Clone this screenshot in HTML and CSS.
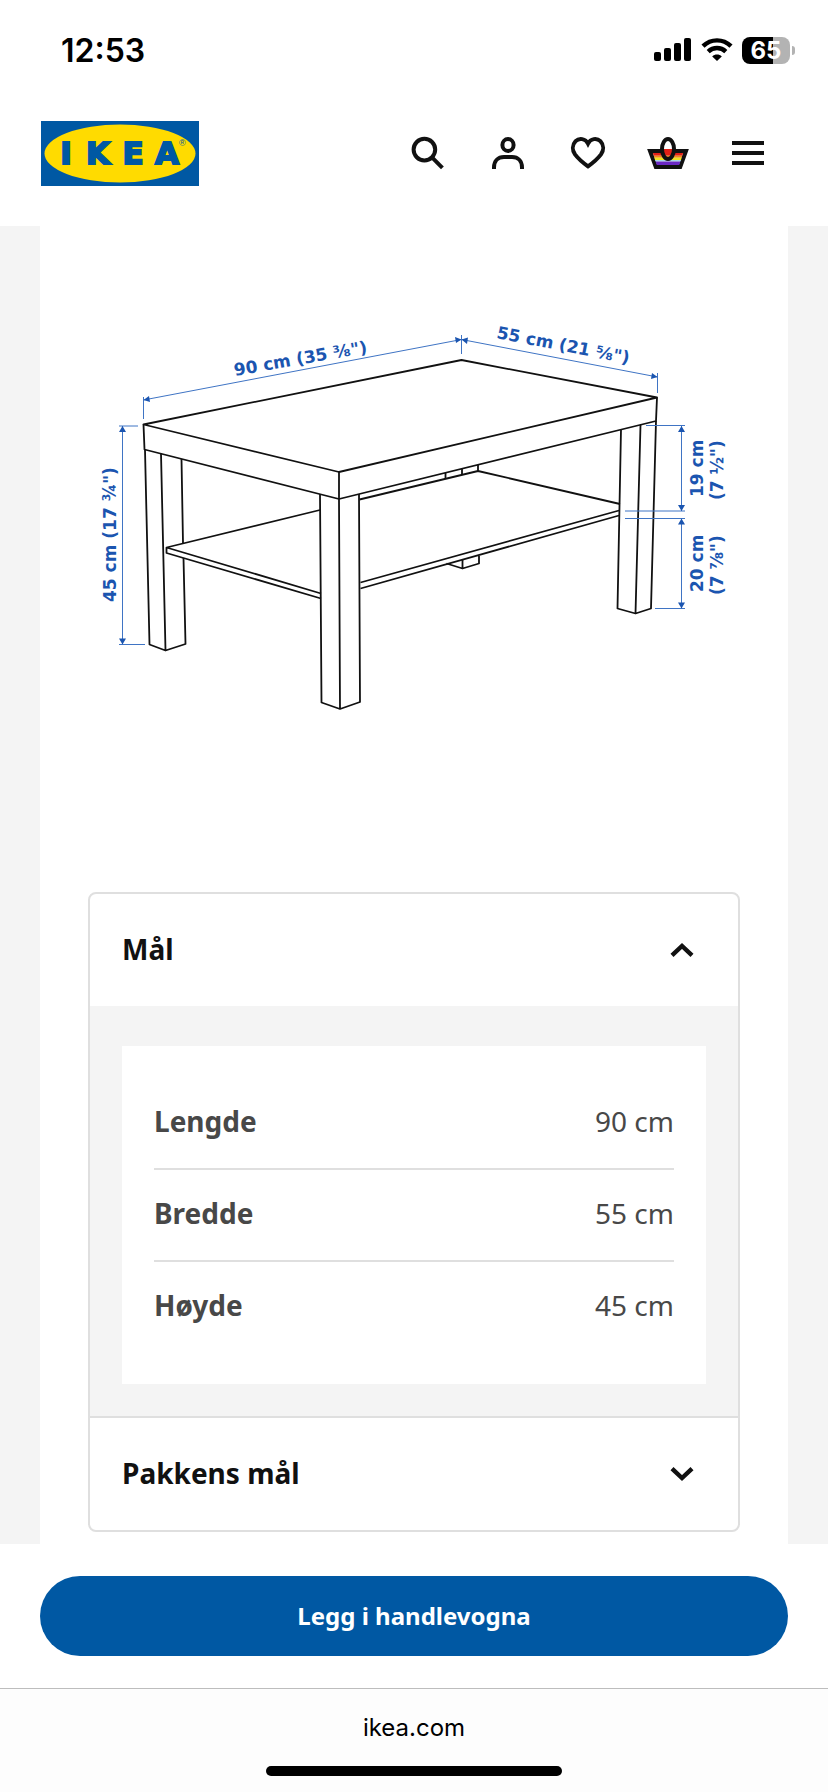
FILE: index.html
```html
<!DOCTYPE html>
<html lang="no">
<head>
  <meta charset="utf-8">
  <meta name="viewport" content="width=device-width, initial-scale=1.0">
  <title>Mål - IKEA</title>
  <link rel="stylesheet" href="styles.css">
</head>
<body>

  <div class="status-bar">
    <span class="time">12:53</span>
    <div class="status-icons">
      <svg class="signal" viewBox="0 0 38 24" width="38" height="24" aria-hidden="true">
        <rect x="0" y="14" width="7" height="9" rx="2"/>
        <rect x="10" y="10" width="7" height="13" rx="2"/>
        <rect x="20" y="5" width="7" height="18" rx="2"/>
        <rect x="30" y="0" width="7" height="23" rx="2"/>
      </svg>
      <svg class="wifi" viewBox="0 0 32 24" width="32" height="24" aria-hidden="true">
        <path d="M2 8.2C10 .4 22 .4 30 8.2" fill="none" stroke="#000" stroke-width="4.4"/>
        <path d="M7.2 13.6c5-4.8 12.6-4.8 17.6 0" fill="none" stroke="#000" stroke-width="4.4"/>
        <path d="M11.2 18.4c2.7-2.5 6.9-2.5 9.6 0L16 23z"/>
      </svg>
      <div class="battery">
        <span class="battery-level">65</span>
        <span class="battery-tip"></span>
      </div>
    </div>
  </div>

  <header class="header">
    <a href="#" class="logo" aria-label="IKEA">
      <svg viewBox="0 0 158 65" width="158" height="65">
        <rect width="158" height="65" fill="#0058a3"/>
        <ellipse cx="79" cy="32.5" rx="75.5" ry="29" fill="#ffdb00"/>
        <text class="logo-text" x="25 57 92 126" y="43">IKEA</text>
        <text class="logo-mark" x="138" y="25">®</text>
      </svg>
    </a>
    <nav class="actions">
      <button type="button" class="icon-btn" aria-label="Søk">
        <svg class="icon" viewBox="0 0 24 24"><circle cx="10.2" cy="10.3" r="5.4"/><path d="M14 14.2l5.2 5.2"/></svg>
      </button>
      <button type="button" class="icon-btn" aria-label="Profil">
        <svg class="icon" viewBox="0 0 24 24"><ellipse cx="12" cy="8" rx="2.8" ry="3"/><path d="M5 20v-.8C5 16 7 14 10 14h4c3 0 5 2 5 5.2v.8"/></svg>
      </button>
      <button type="button" class="icon-btn" aria-label="Favoritter">
        <svg class="icon" viewBox="0 0 24 24"><path d="M12 7.3C10.7 4.7 7.6 4.3 5.8 6.1 4 8 4.1 10.7 5.5 12.7c1.7 2.3 4 4.2 6.5 6 2.5-1.8 4.8-3.7 6.5-6 1.4-2 1.5-4.7-.3-6.6-1.8-1.8-4.9-1.4-6.2 1.2z"/></svg>
      </button>
      <button type="button" class="icon-btn" aria-label="Handlekurv">
        <svg class="icon" viewBox="0 0 24 24">
          <path d="M3 11h18l-2.9 8H5.9z"/>
          <g stroke="none">
            <path fill="#e22016" d="M4.4 12h15.2l-.5 1.4H4.9z"/>
            <path fill="#f28917" d="M4.9 13.4h14.2l-.3 1H5.2z"/>
            <path fill="#efe524" d="M5.2 14.4h13.6l-.3 1.1h-13z"/>
            <path fill="#a5d8e8" d="M5.5 15.5h13l-.3.8H5.8z"/>
            <path fill="#6a27c4" d="M5.8 16.3h12.4l-.6 1.7H6.4z"/>
            <path fill="#fff" d="M9 10c0-3 1.3-5 3-5s3 2 3 5z"/>
            <path fill="#e22016" d="M9 10h6l-1 3h-4z"/>
          </g>
          <ellipse cx="12" cy="10" rx="3" ry="5"/>
        </svg>
      </button>
      <button type="button" class="icon-btn" aria-label="Meny">
        <svg class="icon" viewBox="0 0 24 24"><path d="M4 7h16M4 12h16M4 17h16"/></svg>
      </button>
    </nav>
  </header>

  <main class="page">
    <div class="sheet">
      <svg class="drawing" viewBox="88 306 652 426" role="img" aria-label="Bord med mål">
        <!-- table top -->
        <g class="outline">
          <path d="M143.5 424.5L461.5 360 657 397.5 339 472z"/>
          <path d="M143.5 424.5l1 25L339 499l317-78 1-23.5M339 472v27"/>
          <!-- left leg -->
          <path d="M145 450l4.5 194.5 16 6 20-6.5-2-86M161 453.5l4.5 197M181.5 459l1.5 84"/>
          <!-- front leg -->
          <path d="M320 494l1.5 208.5L340 709l20-7-1-208M339 499l1 210"/>
          <!-- shelf -->
          <path d="M320 510l-153.5 37.5v5.5L321 598.5M166.5 547.5L321 593.5"/>
          <path d="M359.5 499.5L478 471l142 33M360.5 582.5L619 510.5M360.5 588.5L619 515.5"/>
          <!-- back leg -->
          <path d="M445.5 473v6M462 469v6M478 465v6M446.5 563.5l16 5 16.5-5V556M462.5 560v8.5"/>
          <!-- right leg -->
          <path d="M621 429.5l-3.5 179 18 5 15.5-5L656 421M640.5 425l-5 188.5"/>
        </g>
        <g class="measure">
          <path d="M143.5 400l318-60.5 196 37.5M122.5 426v218.5M681.5 426v85M681.5 518.5v90"/>
          <path d="M143.5 397v22M461.5 335v19M657.5 373v20M119 426h19M119 644.5h26"/>
          <path d="M646 425.5h39M625 511h60M625 518.5h60M655 608.5h30"/>
        </g>
        <g class="arrows">
          <path d="M143.5 400l5.5-4 1 6zM461.5 339.5l-6.5-2.5 1 6zM461.5 339.5l5.5 4.5 1-6.5zM657.5 377l-6.5 2 1-6z"/>
          <path d="M122.5 426l-3.5 6h7zM122.5 644.5l-3.5-6h7zM681.5 426l-3.5 6h7zM681.5 511l-3.5-6h7zM681.5 518.5l-3.5 6h7zM681.5 608.5l-3.5-6h7z"/>
        </g>
        <g class="measure-text">
          <text transform="translate(235 376) rotate(-10)">90 cm (35 ⅜")</text>
          <text transform="translate(496 338) rotate(11)">55 cm (21 ⅝")</text>
          <text transform="translate(116 602) rotate(-90)">45 cm (17 ¾")</text>
          <text transform="translate(703 497) rotate(-90)">19 cm</text>
          <text transform="translate(723 500) rotate(-90)">(7 ½")</text>
          <text transform="translate(703 592) rotate(-90)">20 cm</text>
          <text transform="translate(723 595) rotate(-90)">(7 ⅞")</text>
        </g>
      </svg>

      <div class="accordion">
        <button type="button" class="accordion-title" aria-expanded="true" aria-controls="measurements">
          Mål
          <svg class="icon chevron" viewBox="0 0 24 24"><path d="M7 15.2l5-4.7 5 4.7"/></svg>
        </button>
        <div class="accordion-body" id="measurements">
          <div class="table-box">
            <table class="sizes">
              <tr><th scope="row">Lengde</th><td>90 cm</td></tr>
              <tr><th scope="row">Bredde</th><td>55 cm</td></tr>
              <tr><th scope="row">Høyde</th><td>45 cm</td></tr>
            </table>
          </div>
        </div>
        <button type="button" class="accordion-title" aria-expanded="false">
          Pakkens mål
          <svg class="icon chevron" viewBox="0 0 24 24"><path d="M7 9.8l5 4.7 5-4.7"/></svg>
        </button>
      </div>
    </div>
  </main>

  <div class="buy-bar">
    <button type="button" class="buy-btn">Legg i handlevogna</button>
  </div>

  <footer class="browser-bar">
    <span class="address">ikea.com</span>
    <div class="home-line"></div>
  </footer>

</body>
</html>
```
FILE: styles.css
```css
* {
  box-sizing: border-box;
}

body {
  margin: 0;
  min-height: 100vh;
  display: flex;
  flex-direction: column;
  background-color: #fff;
  color: #111;
  font-family: "Noto Sans", sans-serif;
}

button {
  border: none;
  background: none;
  padding: 0;
  color: inherit;
  font-family: inherit;
  cursor: pointer;
}

/* phone status bar */
.status-bar {
  display: flex;
  justify-content: space-between;
  align-items: center;
  height: 100px;
  padding: 0 33px 0 61px;
  color: #000;
  font-family: Inter, sans-serif;
}

.time {
  font-size: 32px;
  font-weight: 600;
}

.status-icons {
  display: flex;
  align-items: center;
  gap: 9px;
}

.battery {
  display: flex;
  align-items: center;
  gap: 2px;
}

.battery-level {
  width: 48px;
  height: 27px;
  border-radius: 8px;
  background: linear-gradient(to right, #000 65%, #b3b3b3 65%);
  color: #fff;
  font-size: 24px;
  font-weight: 700;
  line-height: 27px;
  text-align: center;
}

.battery-tip {
  width: 3px;
  height: 9px;
  border-radius: 0 4px 4px 0;
  background-color: #b3b3b3;
}

/* header */
.header {
  display: flex;
  justify-content: space-between;
  align-items: center;
  padding: 21px 40px 40px 41px;
}

.logo,
.logo svg {
  display: block;
}

.logo-text {
  fill: #0058a3;
  stroke: #0058a3;
  stroke-width: 2px;
  font-family: "DejaVu Sans", sans-serif;
  font-size: 31px;
  font-weight: 700;
  text-anchor: middle;
}

.logo-mark {
  fill: #0058a3;
  font-family: "Liberation Sans", sans-serif;
  font-size: 9px;
}

.actions {
  display: flex;
  padding-bottom: 2px;
}

.icon-btn {
  display: flex;
  justify-content: center;
  width: 80px;
}

.icon {
  display: block;
  width: 48px;
  height: 48px;
  fill: none;
  stroke: #111;
  stroke-width: 2;
}

/* content */
.page {
  flex: 1;
  padding: 0 40px;
  background-color: #f4f4f4;
}

.sheet {
  height: 100%;
  padding: 80px 48px 12px;
  background-color: #fff;
}

.drawing {
  display: block;
  width: 100%;
  margin-bottom: 160px;
}

.outline {
  fill: none;
  stroke: #111;
  stroke-width: 1.8;
  stroke-linejoin: round;
}

.measure {
  fill: none;
  stroke: #3f74c4;
  stroke-width: 1;
}

.arrows,
.measure-text {
  fill: #1b55b0;
}

.measure-text {
  font-family: "DejaVu Sans", sans-serif;
  font-size: 17px;
  font-weight: 700;
}

.accordion {
  border: 2px solid #dfdfdf;
  border-radius: 8px;
  overflow: hidden;
}

.accordion-title {
  display: flex;
  justify-content: space-between;
  align-items: center;
  width: 100%;
  height: 112px;
  padding: 0 32px 2px;
  font-size: 28px;
  font-weight: 700;
}

.chevron {
  stroke-width: 2.2;
}

.accordion-body {
  padding: 40px 32px 32px;
  border-bottom: 2px solid #dfdfdf;
  background-color: #f4f4f4;
}

.table-box {
  padding: 32px;
  background-color: #fff;
}

.sizes {
  width: 100%;
  border-collapse: separate;
  border-spacing: 0;
  color: #484848;
  font-size: 28px;
  line-height: 40px;
}

.sizes th,
.sizes td {
  padding: 23px 0 27px;
  border-bottom: 2px solid #dfdfdf;
}

.sizes tr:last-child th,
.sizes tr:last-child td {
  border-bottom: none;
}

.sizes th {
  text-align: left;
  font-weight: 700;
}

.sizes td {
  text-align: right;
}

/* add to cart */
.buy-bar {
  padding: 32px 40px;
}

.buy-btn {
  display: block;
  width: 100%;
  height: 80px;
  padding-bottom: 2px;
  border-radius: 40px;
  background-color: #0058a3;
  color: #fff;
  font-size: 24px;
  font-weight: 700;
}

/* browser bar */
.browser-bar {
  display: flex;
  flex-direction: column;
  align-items: center;
  gap: 22px;
  padding: 23px 0 16px;
  border-top: 1px solid #bdbdbd;
  background-color: #fdfdfd;
}

.address {
  color: #000;
  font-family: Inter, sans-serif;
  font-size: 24px;
  line-height: 32px;
}

.home-line {
  width: 296px;
  height: 10px;
  border-radius: 5px;
  background-color: #000;
}
```
